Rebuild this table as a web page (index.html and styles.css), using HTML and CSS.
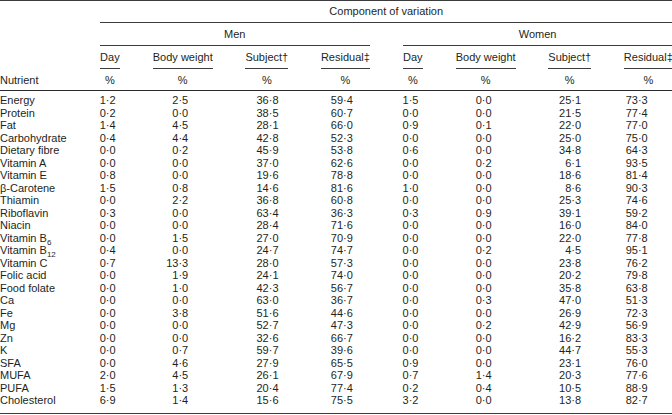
FILE: index.html
```html
<!DOCTYPE html>
<html lang="en">
<head>
<meta charset="utf-8">
<title>Component of variation</title>
<link rel="stylesheet" href="styles.css">
</head>
<body>
<table class="tbl">
  <thead>
    <tr class="h1">
      <th class="first" rowspan="3"></th>
      <th class="grp" colspan="8"><div class="rule">Component of variation</div></th>
    </tr>
    <tr class="h2">
      <th class="grp" colspan="4"><div class="rule">Men</div></th>
      <th class="grp" colspan="4"><div class="rule">Women</div></th>
    </tr>
    <tr class="h3">
      <th class="col"><div class="rule">Day</div></th>
      <th class="col"><div class="rule">Body weight</div></th>
      <th class="col"><div class="rule">Subject†</div></th>
      <th class="col"><div class="rule">Residual‡</div></th>
      <th class="col"><div class="rule">Day</div></th>
      <th class="col"><div class="rule">Body weight</div></th>
      <th class="col"><div class="rule">Subject†</div></th>
      <th class="col"><div class="rule">Residual‡</div></th>
    </tr>
    <tr class="h4">
      <th class="first nutrient">Nutrient</th>
      <th class="col">%</th><th class="col">%</th><th class="col">%</th><th class="col">%</th>
      <th class="col">%</th><th class="col">%</th><th class="col">%</th><th class="col">%</th>
    </tr>
  </thead>
  <tbody>
    <tr><td>Energy</td><td>1·2</td><td>2·5</td><td>36·8</td><td>59·4</td><td>1·5</td><td>0·0</td><td>25·1</td><td>73·3</td></tr>
    <tr><td>Protein</td><td>0·2</td><td>0·0</td><td>38·5</td><td>60·7</td><td>0·0</td><td>0·0</td><td>21·5</td><td>77·4</td></tr>
    <tr><td>Fat</td><td>1·4</td><td>4·5</td><td>28·1</td><td>66·0</td><td>0·9</td><td>0·1</td><td>22·0</td><td>77·0</td></tr>
    <tr><td>Carbohydrate</td><td>0·4</td><td>4·4</td><td>42·8</td><td>52·3</td><td>0·0</td><td>0·0</td><td>25·0</td><td>75·0</td></tr>
    <tr><td>Dietary fibre</td><td>0·0</td><td>0·2</td><td>45·9</td><td>53·8</td><td>0·6</td><td>0·0</td><td>34·8</td><td>64·3</td></tr>
    <tr><td>Vitamin A</td><td>0·0</td><td>0·0</td><td>37·0</td><td>62·6</td><td>0·0</td><td>0·2</td><td>6·1</td><td>93·5</td></tr>
    <tr><td>Vitamin E</td><td>0·8</td><td>0·0</td><td>19·6</td><td>78·8</td><td>0·0</td><td>0·0</td><td>18·6</td><td>81·4</td></tr>
    <tr><td>β-Carotene</td><td>1·5</td><td>0·8</td><td>14·6</td><td>81·6</td><td>1·0</td><td>0·0</td><td>8·6</td><td>90·3</td></tr>
    <tr><td>Thiamin</td><td>0·0</td><td>2·2</td><td>36·8</td><td>60·8</td><td>0·0</td><td>0·0</td><td>25·3</td><td>74·6</td></tr>
    <tr><td>Riboflavin</td><td>0·3</td><td>0·0</td><td>63·4</td><td>36·3</td><td>0·3</td><td>0·9</td><td>39·1</td><td>59·2</td></tr>
    <tr><td>Niacin</td><td>0·0</td><td>0·0</td><td>28·4</td><td>71·6</td><td>0·0</td><td>0·0</td><td>16·0</td><td>84·0</td></tr>
    <tr><td>Vitamin B<span class="sub">6</span></td><td>0·0</td><td>1·5</td><td>27·0</td><td>70·9</td><td>0·0</td><td>0·0</td><td>22·0</td><td>77·8</td></tr>
    <tr><td>Vitamin B<span class="sub">12</span></td><td>0·4</td><td>0·0</td><td>24·7</td><td>74·7</td><td>0·0</td><td>0·2</td><td>4·5</td><td>95·1</td></tr>
    <tr><td>Vitamin C</td><td>0·7</td><td>13·3</td><td>28·0</td><td>57·3</td><td>0·0</td><td>0·0</td><td>23·8</td><td>76·2</td></tr>
    <tr><td>Folic acid</td><td>0·0</td><td>1·9</td><td>24·1</td><td>74·0</td><td>0·0</td><td>0·0</td><td>20·2</td><td>79·8</td></tr>
    <tr><td>Food folate</td><td>0·0</td><td>1·0</td><td>42·3</td><td>56·7</td><td>0·0</td><td>0·0</td><td>35·8</td><td>63·8</td></tr>
    <tr><td>Ca</td><td>0·0</td><td>0·0</td><td>63·0</td><td>36·7</td><td>0·0</td><td>0·3</td><td>47·0</td><td>51·3</td></tr>
    <tr><td>Fe</td><td>0·0</td><td>3·8</td><td>51·6</td><td>44·6</td><td>0·0</td><td>0·0</td><td>26·9</td><td>72·3</td></tr>
    <tr><td>Mg</td><td>0·0</td><td>0·0</td><td>52·7</td><td>47·3</td><td>0·0</td><td>0·2</td><td>42·9</td><td>56·9</td></tr>
    <tr><td>Zn</td><td>0·0</td><td>0·0</td><td>32·6</td><td>66·7</td><td>0·0</td><td>0·0</td><td>16·2</td><td>83·3</td></tr>
    <tr><td>K</td><td>0·0</td><td>0·7</td><td>59·7</td><td>39·6</td><td>0·0</td><td>0·0</td><td>44·7</td><td>55·3</td></tr>
    <tr><td>SFA</td><td>0·0</td><td>4·6</td><td>27·9</td><td>65·5</td><td>0·9</td><td>0·0</td><td>23·1</td><td>76·0</td></tr>
    <tr><td>MUFA</td><td>2·0</td><td>4·5</td><td>26·1</td><td>67·9</td><td>0·7</td><td>1·4</td><td>20·3</td><td>77·6</td></tr>
    <tr><td>PUFA</td><td>1·5</td><td>1·3</td><td>20·4</td><td>77·4</td><td>0·2</td><td>0·4</td><td>10·5</td><td>88·9</td></tr>
    <tr><td>Cholesterol</td><td>6·9</td><td>1·4</td><td>15·6</td><td>75·5</td><td>3·2</td><td>0·0</td><td>13·8</td><td>82·7</td></tr>
  </tbody>
</table>
</body>
</html>
```

FILE: styles.css
```css
html, body {
  margin: 0;
  padding: 0;
  background: #ffffff;
}

body {
  font-family: "Liberation Sans", Arial, sans-serif;
  font-size: 11px;
  color: #231f20;
}

.tbl {
  border-collapse: collapse;
  border-spacing: 0;
  border-top: 1px solid #3c3c3c;
  border-bottom: 1px solid #3c3c3c;
}

.tbl th {
  font-weight: normal;
  line-height: 13px;
  padding: 0;
  text-align: center;
  white-space: nowrap;
}

.tbl .first {
  width: 67px;
  min-width: 67px;
  text-align: left;
}

.tbl .grp,
.tbl .col {
  padding-left: 32.7px;
}

.rule {
  border-bottom: 1px solid #3c3c3c;
}

.h1 .rule {
  padding: 3.5px 0 4.5px;
}

.h2 .rule,
.h3 .rule {
  padding: 4.5px 0 4.5px;
}

.h4 th {
  padding-top: 4.5px;
  padding-bottom: 3px;
  vertical-align: bottom;
  border-bottom: 1px solid #2a2a2a;
}

.tbl td {
  padding: 0 0 0 32.7px;
  line-height: 12.5px;
  text-align: right;
  white-space: nowrap;
}

.tbl td:first-child {
  padding-left: 0;
  text-align: left;
}

.tbl td:nth-child(2) { padding-right: 4.5px; }
.tbl td:nth-child(3) { padding-right: 24.5px; }
.tbl td:nth-child(4) { padding-right: 9.7px; }
.tbl td:nth-child(5) { padding-right: 17px; }
.tbl td:nth-child(6) { padding-right: 4.6px; }
.tbl td:nth-child(7) { padding-right: 24px; }
.tbl td:nth-child(8) { padding-right: 10px; }
.tbl td:nth-child(9) { padding-right: 25px; }

.tbl tbody tr:first-child td {
  padding-top: 3.75px;
}

.tbl tbody tr:last-child td {
  padding-bottom: 6px;
}

.sub {
  font-size: 8px;
  line-height: 0;
  vertical-align: -2.5px;
}
```
